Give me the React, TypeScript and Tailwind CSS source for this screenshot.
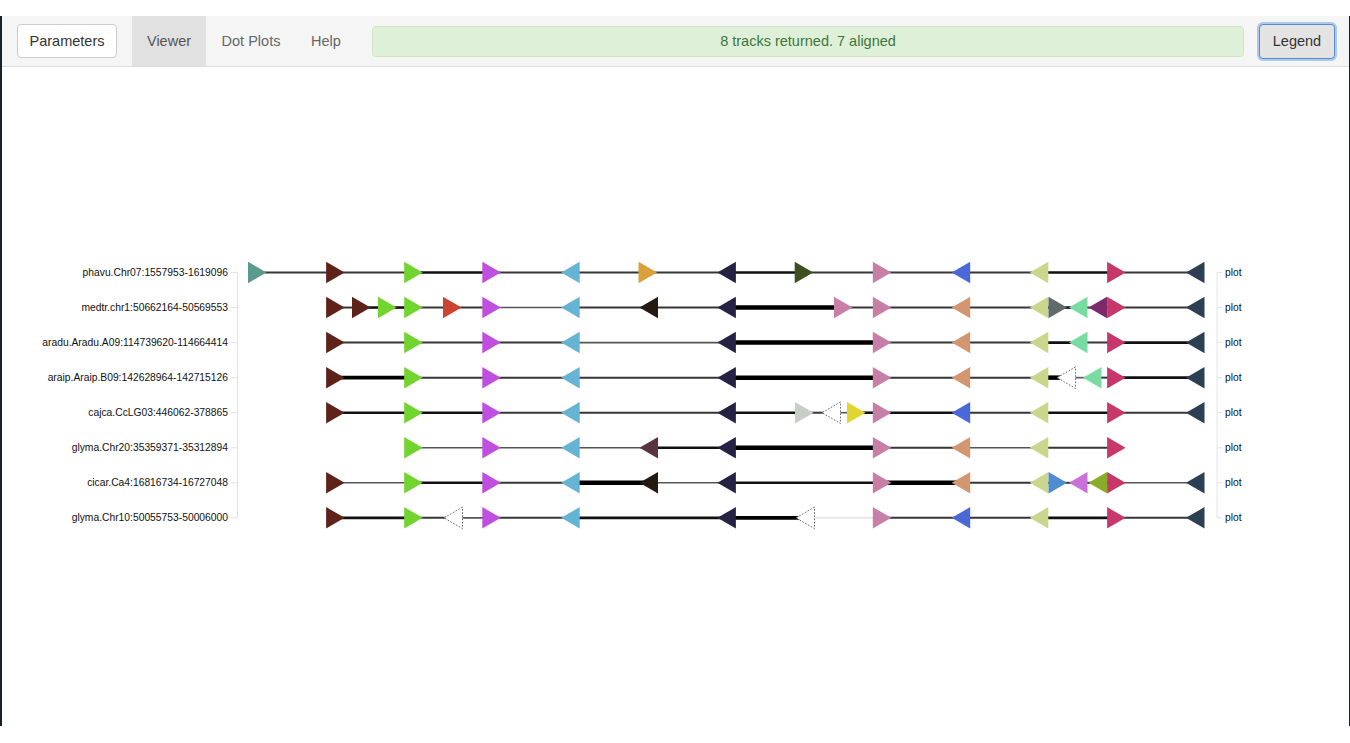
import React from "react";

type Tri = [number, "r" | "l", string];
type Seg = [number, string];

const R = (i: number) => 248 + 78.1 * i;
const L = (i: number) => 248.8 + 78.1 * i;

const C = {
  teal: "#5b9b8f",
  brown: "#5e2219",
  green: "#72d42f",
  mag: "#c04fe0",
  lb: "#66b4d3",
  orange: "#dca03a",
  navy: "#262244",
  olive: "#3d5120",
  pink: "#c77fa7",
  blue: "#4a68d8",
  yg: "#c9d68b",
  crimson: "#c8376a",
  slate: "#2c3f53",
  salmon: "#d49571",
  red: "#cc4330",
  mint: "#78dca2",
  gray: "#5f6b6b",
  purple: "#7c2a6c",
  bb: "#231a14",
  maroon: "#5b3441",
  silver: "#c9cdc7",
  yellow: "#e1d62f",
  blue2: "#4f8bd1",
  orchid: "#c970db",
  og: "#89ad2a",
  dash: "DASH",
};

const N: Seg = [2, "#363636"];
const T: Seg = [1.6, "#555"];
const B: Seg = [2.6, "#111"];
const K: Seg = [4.5, "#000"];
const K2: Seg = [3.6, "#000"];
const X: Seg = [2, "#e8e8e8"];

type Row = { label: string; tris: Tri[]; segs: Seg[] };

const rows: Row[] = [
  {
    label: "phavu.Chr07:1557953-1619096",
    tris: [
      [R(0), "r", C.teal],
      [R(1), "r", C.brown],
      [R(2), "r", C.green],
      [R(3), "r", C.mag],
      [L(4), "l", C.lb],
      [R(5), "r", C.orange],
      [L(6), "l", C.navy],
      [R(7), "r", C.olive],
      [R(8), "r", C.pink],
      [L(9), "l", C.blue],
      [L(10), "l", C.yg],
      [R(11), "r", C.crimson],
      [L(12), "l", C.slate],
    ],
    segs: [N, N, B, N, N, N, B, N, N, N, B, N],
  },
  {
    label: "medtr.chr1:50662164-50569553",
    tris: [
      [R(1), "r", C.brown],
      [352, "r", C.brown],
      [378, "r", C.green],
      [R(2), "r", C.green],
      [443, "r", C.red],
      [R(3), "r", C.mag],
      [L(4), "l", C.lb],
      [639.5, "l", C.bb],
      [L(6), "l", C.navy],
      [834, "r", C.pink],
      [R(8), "r", C.pink],
      [L(9), "l", C.salmon],
      [L(10), "l", C.yg],
      [1048.5, "r", C.gray],
      [1069, "l", C.mint],
      [1088.5, "l", C.purple],
      [R(11), "r", C.crimson],
      [L(12), "l", C.slate],
    ],
    segs: [N, B, B, N, N, T, N, N, K, N, N, N, B, B, N, N, N],
  },
  {
    label: "aradu.Aradu.A09:114739620-114664414",
    tris: [
      [R(1), "r", C.brown],
      [R(2), "r", C.green],
      [R(3), "r", C.mag],
      [L(4), "l", C.lb],
      [L(6), "l", C.navy],
      [R(8), "r", C.pink],
      [L(9), "l", C.salmon],
      [L(10), "l", C.yg],
      [1069, "l", C.mint],
      [R(11), "r", C.crimson],
      [L(12), "l", C.slate],
    ],
    segs: [N, N, N, T, K, N, N, B, N, B],
  },
  {
    label: "araip.Araip.B09:142628964-142715126",
    tris: [
      [R(1), "r", C.brown],
      [R(2), "r", C.green],
      [R(3), "r", C.mag],
      [L(4), "l", C.lb],
      [L(6), "l", C.navy],
      [R(8), "r", C.pink],
      [L(9), "l", C.salmon],
      [L(10), "l", C.yg],
      [1057, "l", C.dash],
      [1083, "l", C.mint],
      [R(11), "r", C.crimson],
      [L(12), "l", C.slate],
    ],
    segs: [K2, N, N, N, K, N, N, K, T, N, B],
  },
  {
    label: "cajca.CcLG03:446062-378865",
    tris: [
      [R(1), "r", C.brown],
      [R(2), "r", C.green],
      [R(3), "r", C.mag],
      [L(4), "l", C.lb],
      [L(6), "l", C.navy],
      [795, "r", C.silver],
      [822, "l", C.dash],
      [847, "r", C.yellow],
      [R(8), "r", C.pink],
      [L(9), "l", C.blue],
      [L(10), "l", C.yg],
      [R(11), "r", C.crimson],
      [L(12), "l", C.slate],
    ],
    segs: [B, B, N, N, B, N, T, B, B, N, B, N],
  },
  {
    label: "glyma.Chr20:35359371-35312894",
    tris: [
      [R(2), "r", C.green],
      [R(3), "r", C.mag],
      [L(4), "l", C.lb],
      [639.5, "l", C.maroon],
      [L(6), "l", C.navy],
      [R(8), "r", C.pink],
      [L(9), "l", C.salmon],
      [L(10), "l", C.yg],
      [R(11), "r", C.crimson],
    ],
    segs: [T, T, T, B, K, N, T, N],
  },
  {
    label: "cicar.Ca4:16816734-16727048",
    tris: [
      [R(1), "r", C.brown],
      [R(2), "r", C.green],
      [R(3), "r", C.mag],
      [L(4), "l", C.lb],
      [639.5, "l", C.bb],
      [L(6), "l", C.navy],
      [R(8), "r", C.pink],
      [L(9), "l", C.salmon],
      [L(10), "l", C.yg],
      [1048.5, "r", C.blue2],
      [1069, "l", C.orchid],
      [1088.5, "l", C.og],
      [R(11), "r", C.crimson],
      [L(12), "l", C.slate],
    ],
    segs: [T, B, N, K, T, B, K, N, N, N, N, N, T],
  },
  {
    label: "glyma.Chr10:50055753-50006000",
    tris: [
      [R(1), "r", C.brown],
      [R(2), "r", C.green],
      [444, "l", C.dash],
      [R(3), "r", C.mag],
      [L(4), "l", C.lb],
      [L(6), "l", C.navy],
      [796, "l", C.dash],
      [R(8), "r", C.pink],
      [L(9), "l", C.blue],
      [L(10), "l", C.yg],
      [R(11), "r", C.crimson],
      [L(12), "l", C.slate],
    ],
    segs: [B, N, T, N, B, K2, X, N, N, B, N],
  },
];

const W = 18.5;
const H = 21.5;
const rowY = (i: number) => 272.5 + 35.05 * i;

function TriShape({ t, cy }: { t: Tri; cy: number }) {
  const [x, dir, color] = t;
  const pts =
    dir === "r"
      ? `${x},${cy - H / 2} ${x + W},${cy} ${x},${cy + H / 2}`
      : `${x + W},${cy - H / 2} ${x},${cy} ${x + W},${cy + H / 2}`;
  if (color === "DASH") {
    return (
      <polygon
        points={pts}
        fill="#fff"
        stroke="#666"
        strokeWidth={1}
        strokeDasharray="1.6 1.6"
      />
    );
  }
  return <polygon points={pts} fill={color} />;
}

function Chart() {
  const font = "'Liberation Sans', Arial, Helvetica, sans-serif";
  const y0 = rowY(0);
  const y7 = rowY(7);
  return (
    <svg width={1346} height={659} viewBox="2 67 1346 659" className="block">
      <line x1={237.5} y1={y0} x2={237.5} y2={y7} stroke="#e3e3e3" strokeWidth={1} />
      <line x1={1217} y1={y0} x2={1217} y2={y7} stroke="#e3e3e3" strokeWidth={1} />
      {rows.map((row, i) => {
        const cy = rowY(i);
        return (
          <g key={i}>
            <line x1={231} y1={cy} x2={237.5} y2={cy} stroke="#e3e3e3" strokeWidth={1} />
            <line x1={1217} y1={cy} x2={1222.5} y2={cy} stroke="#e3e3e3" strokeWidth={1} />
            <text
              x={228}
              y={cy + 3.4}
              textAnchor="end"
              fontSize={10.3}
              fontFamily={font}
              fill="#111"
            >
              {row.label}
            </text>
            <text x={1225} y={cy + 3.4} fontSize={10.3} fontFamily={font} fill="#111">
              plot
            </text>
            {row.segs.map((s, k) => {
              const a = row.tris[k][0] + W / 2;
              const b = row.tris[k + 1][0] + W / 2;
              return (
                <line
                  key={k}
                  x1={a}
                  y1={cy}
                  x2={b}
                  y2={cy}
                  stroke={s[1]}
                  strokeWidth={s[0]}
                />
              );
            })}
            {row.tris.map((t, k) => (
              <TriShape key={k} t={t} cy={cy} />
            ))}
          </g>
        );
      })}
    </svg>
  );
}

export default function App() {
  return (
    <div
      className="w-[1350px] h-[743px] bg-white overflow-hidden"
      style={{ fontFamily: "'Liberation Sans', Arial, Helvetica, sans-serif" }}
    >
      <div className="mt-[16px] h-[710px] border-l-[2px] border-r border-[#16212b] flex flex-col">
        <div className="h-[51px] shrink-0 bg-[#f5f5f5] border-b border-[#dddddd] flex items-center pl-[15px] pr-[14px]">
          <button className="w-[100px] h-[34px] pt-[2px] bg-white border border-[#cccccc] rounded-[4px] text-[14.5px] text-[#333] flex items-center justify-center">
            Parameters
          </button>
          <div className="ml-[15px] flex h-full">
            <div className="w-[74px] h-full pt-[2px] bg-[#e1e1e1] text-[#555] text-[14.5px] flex items-center justify-center">
              Viewer
            </div>
            <div className="w-[90px] h-full pt-[2px] text-[#666] text-[14.5px] flex items-center justify-center">
              Dot Plots
            </div>
            <div className="w-[60px] h-full pt-[2px] text-[#666] text-[14.5px] flex items-center justify-center">
              Help
            </div>
          </div>
          <div className="ml-[16px] flex-1 h-[31px] pt-[2px] bg-[#dff0d8] border border-[#d3e6c3] rounded-[4px] text-[#3c763d] text-[14.5px] flex items-center justify-center">
            8 tracks returned. 7 aligned
          </div>
          <button className="ml-[15px] w-[76px] h-[35px] pt-[2px] bg-[#e3e3e3] border border-[#5b8bc6] rounded-[4px] shadow-[0_0_0_2px_rgba(102,160,225,0.5)] text-[14.5px] text-[#333] flex items-center justify-center">
            Legend
          </button>
        </div>
        <div className="flex-1 bg-white">
          <Chart />
        </div>
      </div>
    </div>
  );
}
